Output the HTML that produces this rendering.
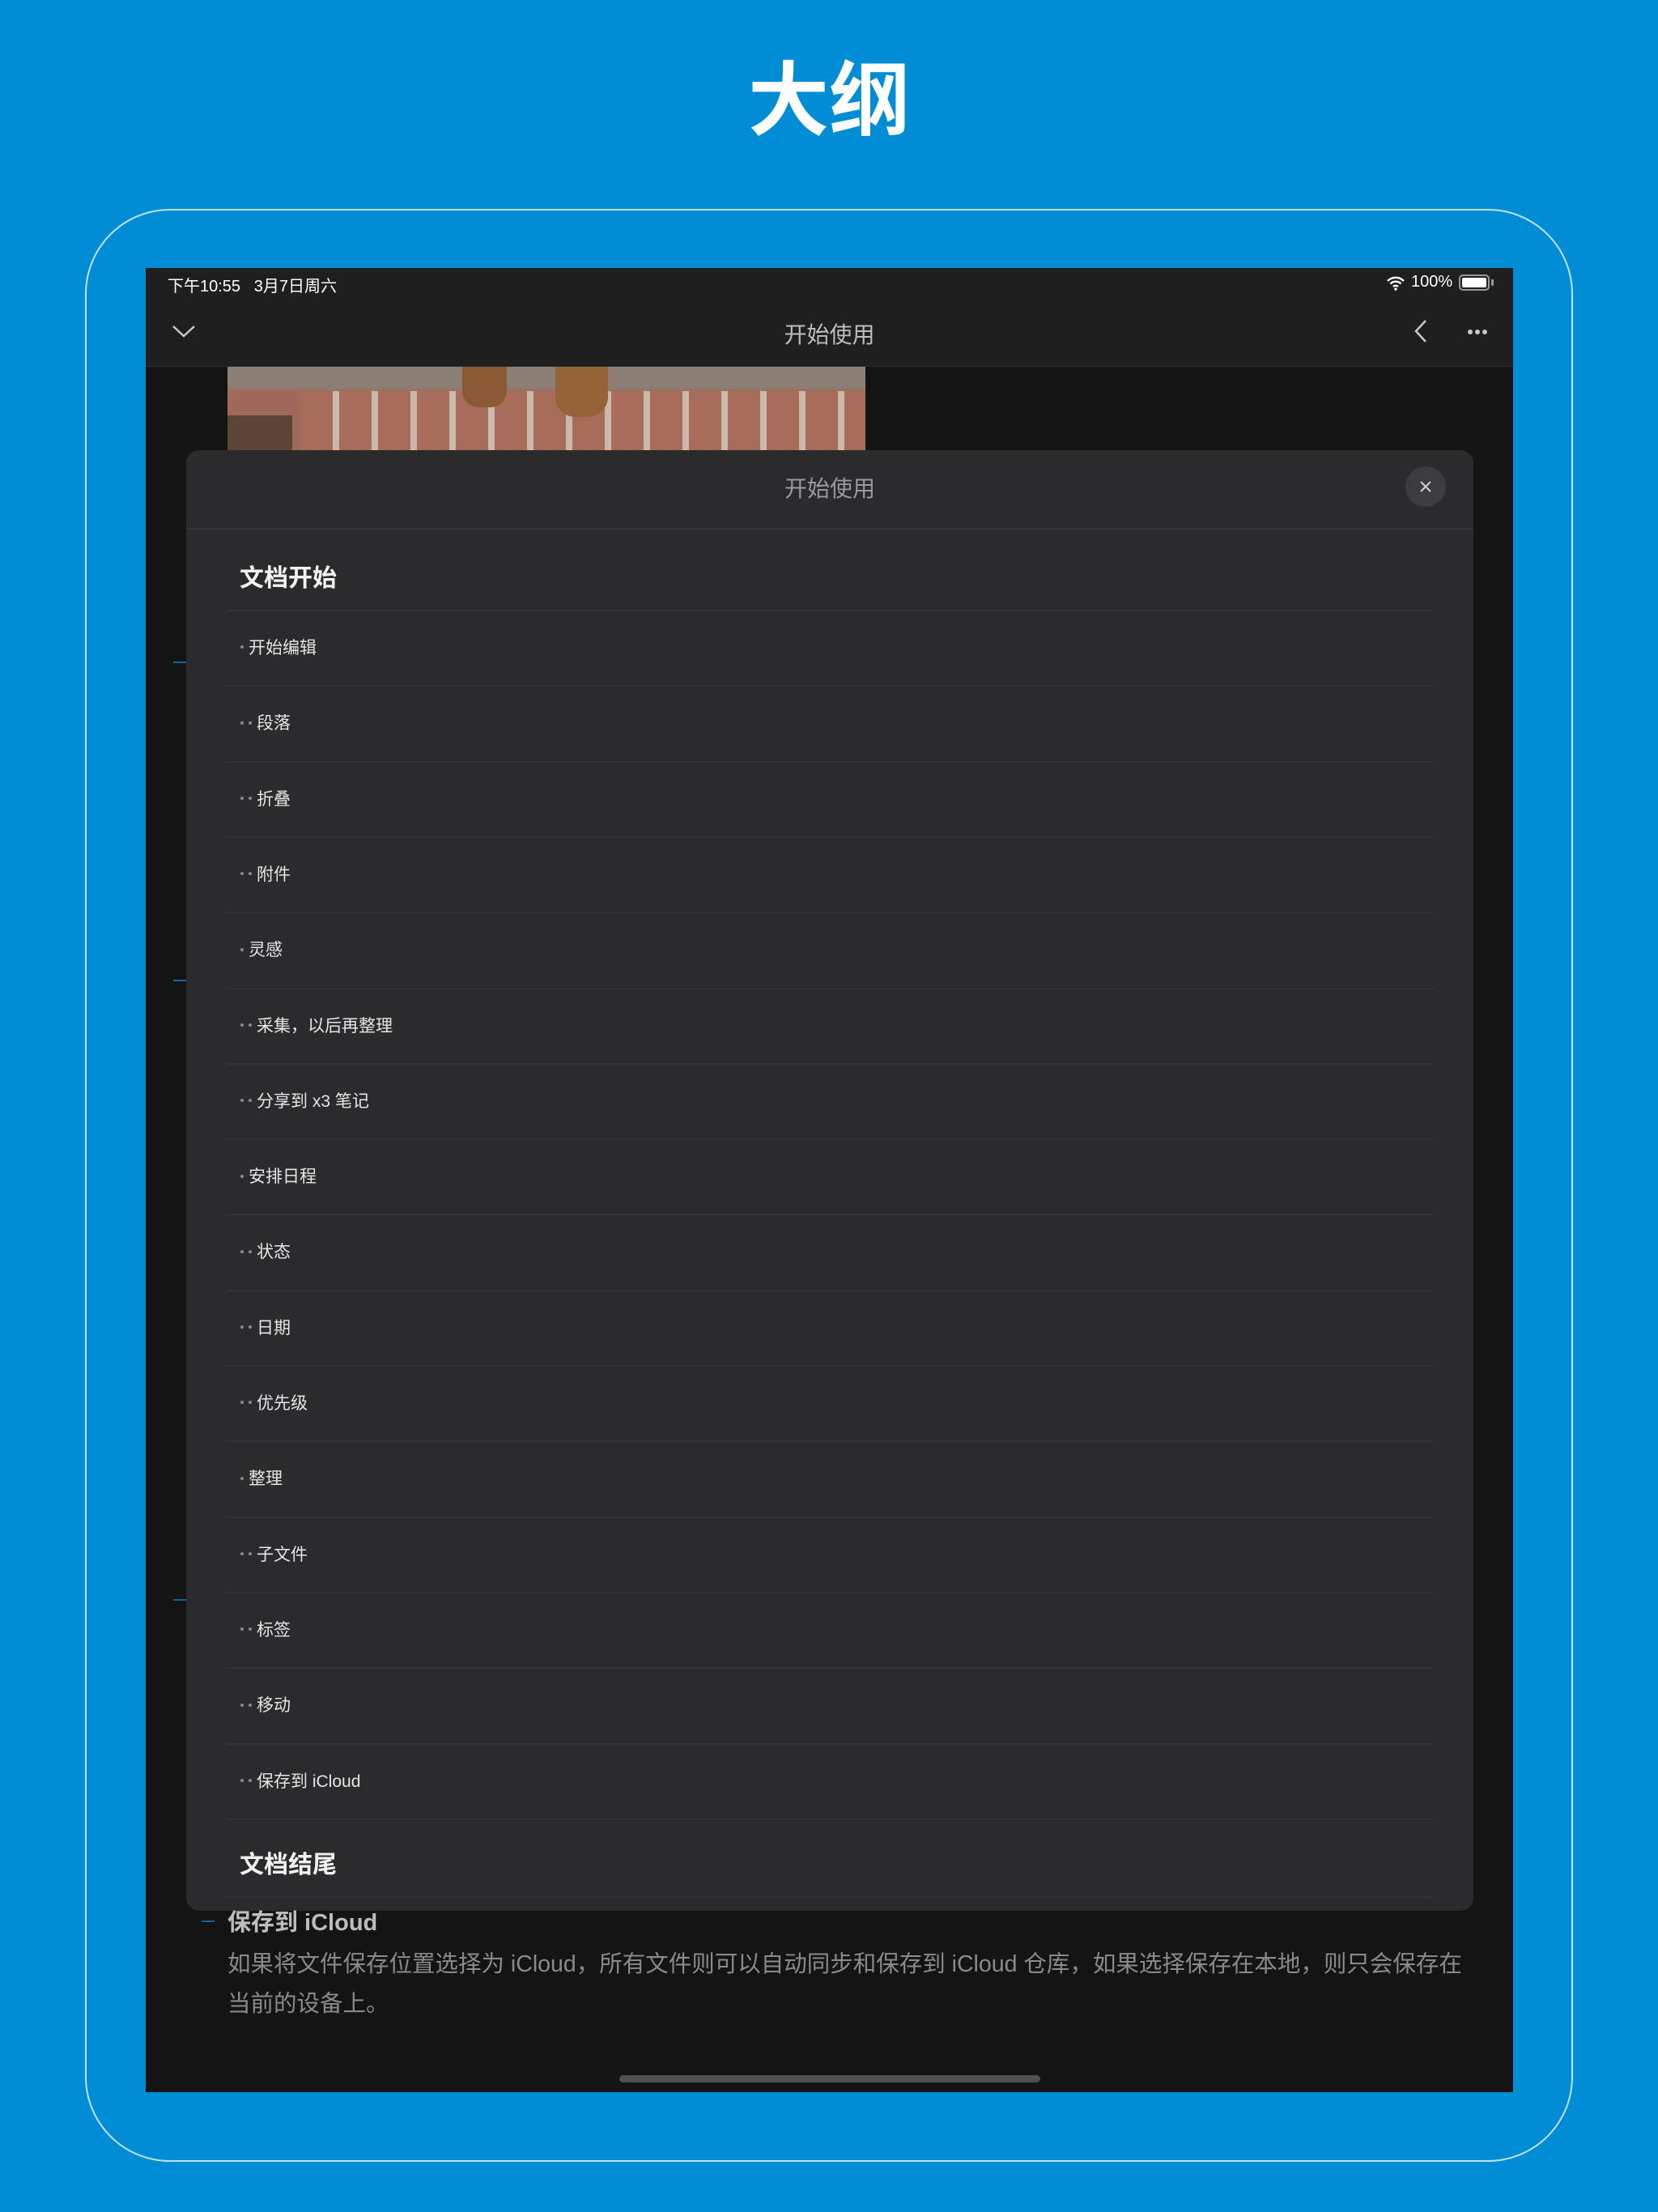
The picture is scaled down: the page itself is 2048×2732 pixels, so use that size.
<!DOCTYPE html>
<html><head><meta charset="utf-8"><style>
*{margin:0;padding:0;box-sizing:border-box}
body{width:2048px;height:2732px;background:#008dd5;position:relative;overflow:hidden;font-family:"Liberation Sans","Noto Sans CJK SC",sans-serif}
.title{position:absolute;top:60px;left:0;width:2048px;text-align:center;color:#fff;font-size:100px;font-weight:bold;line-height:130px}
.frame{position:absolute;left:105px;top:258px;width:1838px;height:2412px;border:2px solid rgba(255,255,255,.75);border-radius:105px}
.screen{position:absolute;left:180px;top:331px;width:1689px;height:2253px;background:#141414;overflow:hidden}
.status{position:absolute;left:0;top:0;width:100%;height:39px;background:#1f1f1f;color:#fff;font-size:20px}
.nav{position:absolute;left:0;top:39px;width:100%;height:83px;background:#1f1f1f;border-bottom:1px solid #2c2c2c}
.nav .t{position:absolute;width:100%;text-align:center;top:22px;color:#bdbdbd;font-size:28px}
.img{position:absolute;left:101px;top:122px;width:788px;height:103px;background:linear-gradient(180deg,#8d8178 0,#8a7d74 25%,#a3695a 30%,#9a6a5c 100%);overflow:hidden}
.modal{position:absolute;left:50px;top:225px;width:1590px;height:1804px;background:#2b2b2d;border-radius:16px}
.mh{height:98px;border-bottom:2px solid #353537;text-align:center;color:#9a9a9c;font-size:28px;line-height:96px;position:relative}
.close{position:absolute;right:34px;top:20px;width:50px;height:50px;border-radius:50%;background:#3c3c3e}
.close svg{display:block}
.sec{position:absolute;left:66px;color:#f2f2f2;font-size:30px;font-weight:bold}
.row{position:absolute;left:49px;width:1492px;height:93.3px;border-top:2px solid #343436;color:#e6e6e6;font-size:21px;line-height:92px;padding-left:18px}
.d{display:inline-block;width:4px;height:4px;border-radius:50%;background:#8a8a8a;margin-right:6px;vertical-align:middle;position:relative;top:-2px}
.bot{position:absolute;left:101px;color:#8a8a8a;font-size:28.5px}
.dash{position:absolute;width:16px;height:2px;background:#0a6aa0}
</style></head><body>
<div class="title">大纲</div>
<div class="frame"></div>
<div class="screen">
 <div class="status"><span style="position:absolute;left:27px;top:6px">下午10:55&nbsp;&nbsp;&nbsp;3月7日周六</span>
 <svg style="position:absolute;left:1532px;top:10px" width="24" height="18" viewBox="0 0 24 18"><path d="M2 6a14 14 0 0 1 20 0M5.5 9.5a9 9 0 0 1 13 0M9 13a4 4 0 0 1 6 0" stroke="#fff" stroke-width="2.4" fill="none"/><circle cx="12" cy="16" r="1.8" fill="#fff"/></svg>
 <span style="position:absolute;left:1563px;top:6px">100%</span>
 <div style="position:absolute;left:1622px;top:8px;width:38px;height:20px;border:2px solid #999;border-radius:5px;padding:2px"><div style="width:100%;height:100%;background:#fff;border-radius:2px"></div></div>
 <div style="position:absolute;left:1662px;top:14px;width:3px;height:8px;background:#999;border-radius:1px"></div>
 </div>
 <div class="nav"><svg style="position:absolute;left:32px;top:30px" width="30" height="18" viewBox="0 0 30 18"><path d="M2 3l13 12L28 3" stroke="#c8c8c8" stroke-width="2.5" fill="none"/></svg>
 <div class="t">开始使用</div>
 <svg style="position:absolute;left:1566px;top:24px" width="18" height="30" viewBox="0 0 18 30"><path d="M15 2L3 15l12 13" stroke="#c8c8c8" stroke-width="2.5" fill="none"/></svg>
 <svg style="position:absolute;left:1632px;top:36px" width="26" height="8"><circle cx="4" cy="4" r="3" fill="#c8c8c8"/><circle cx="13" cy="4" r="3" fill="#c8c8c8"/><circle cx="22" cy="4" r="3" fill="#c8c8c8"/></svg></div>
 <div class="img">
  <div style="position:absolute;left:0;top:0;width:100%;height:26px;background:#8b7f76"></div>
  <div style="position:absolute;left:90px;top:30px;width:698px;height:73px;background:repeating-linear-gradient(90deg,#a86c5a 0 40px,#c9b8ac 40px 48px)"></div>
  <div style="position:absolute;left:290px;top:0;width:55px;height:50px;background:#8a5a35;border-radius:0 0 20px 20px"></div>
  <div style="position:absolute;left:405px;top:0;width:65px;height:62px;background:#946438;border-radius:0 0 25px 25px"></div>
  <div style="position:absolute;left:0;top:60px;width:80px;height:43px;background:#5a4536"></div>
 </div>
 <div class="dash" style="left:34px;top:486px"></div>
 <div class="dash" style="left:34px;top:879px"></div>
 <div class="dash" style="left:34px;top:1644px"></div>
 <div class="modal">
  <div class="mh">开始使用<div class="close"><svg width="50" height="50" viewBox="0 0 50 50"><path d="M19 19l12 12M31 19L19 31" stroke="#d0d0d0" stroke-width="2"/></svg></div></div>
  <div class="sec" style="top:133px">文档开始</div>
  <div class="row" style="top:197px"><span class="d"></span>开始编辑</div>
  <div class="row" style="top:290.3px"><span class="d"></span><span class="d"></span>段落</div>
  <div class="row" style="top:383.6px"><span class="d"></span><span class="d"></span>折叠</div>
  <div class="row" style="top:476.9px"><span class="d"></span><span class="d"></span>附件</div>
  <div class="row" style="top:570.2px"><span class="d"></span>灵感</div>
  <div class="row" style="top:663.5px"><span class="d"></span><span class="d"></span>采集，以后再整理</div>
  <div class="row" style="top:756.8px"><span class="d"></span><span class="d"></span>分享到 x3 笔记</div>
  <div class="row" style="top:850.1px"><span class="d"></span>安排日程</div>
  <div class="row" style="top:943.4px"><span class="d"></span><span class="d"></span>状态</div>
  <div class="row" style="top:1036.7px"><span class="d"></span><span class="d"></span>日期</div>
  <div class="row" style="top:1130px"><span class="d"></span><span class="d"></span>优先级</div>
  <div class="row" style="top:1223.3px"><span class="d"></span>整理</div>
  <div class="row" style="top:1316.6px"><span class="d"></span><span class="d"></span>子文件</div>
  <div class="row" style="top:1409.9px"><span class="d"></span><span class="d"></span>标签</div>
  <div class="row" style="top:1503.2px"><span class="d"></span><span class="d"></span>移动</div>
  <div class="row" style="top:1596.5px"><span class="d"></span><span class="d"></span>保存到 iCloud</div>
  <div class="row" style="top:1689.8px;height:2px"></div>
  <div class="sec" style="top:1722px">文档结尾</div>
  <div class="row" style="top:1786px;height:2px"></div>
 </div>
 <div class="dash" style="left:69px;top:2041px"></div>
 <div class="bot" style="top:2020px;color:#bdbdbd;font-weight:bold;font-size:29px">保存到 iCloud</div>
 <div class="bot" style="top:2072px">如果将文件保存位置选择为 iCloud，所有文件则可以自动同步和保存到 iCloud 仓库，如果选择保存在本地，则只会保存在</div>
 <div class="bot" style="top:2121px">当前的设备上。</div>
 <div style="position:absolute;left:585px;top:2232px;width:520px;height:9px;border-radius:5px;background:#505050"></div>
</div>
</body></html>
